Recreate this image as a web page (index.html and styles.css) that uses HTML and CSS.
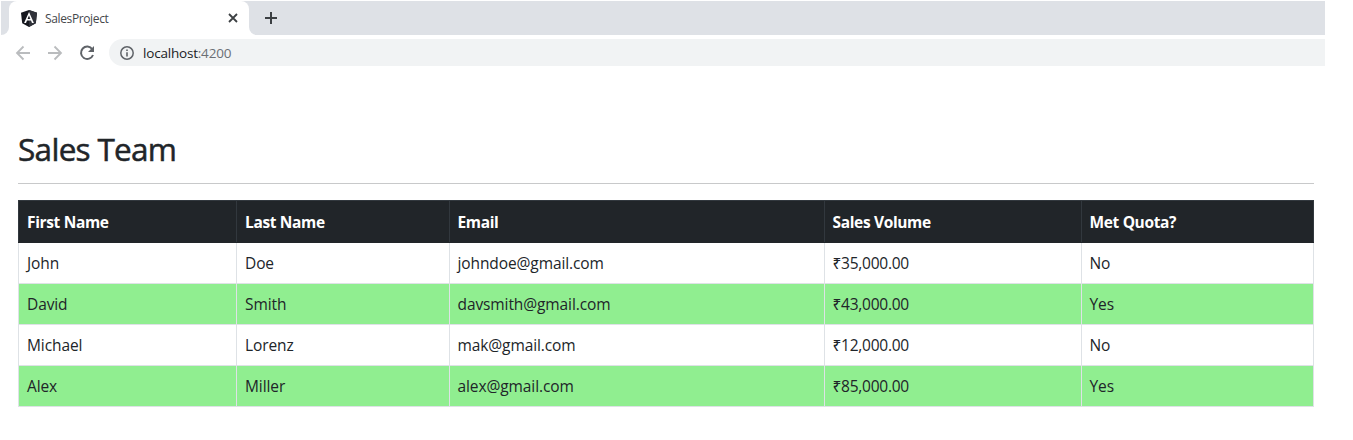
FILE: index.html
```
<!DOCTYPE html>
<html lang="en">
<head>
<meta charset="utf-8">
<title>SalesProject</title>
<link rel="stylesheet" href="styles.css">
</head>
<body>
<header class="browser">
  <div class="tabstrip">
    <div class="edge edge-left"></div>
    <div class="tab">
      <svg class="favicon" width="16" height="17" viewBox="0 0 16 17"><path fill="#15171e" d="M8 0l8 2.8-1.2 10.5L8 17l-6.800-3.700L0 2.800z"/><path fill="#30323a" d="M8 0l8 2.800-1.200 10.500L8 17z"/><path fill="#fff" fill-rule="evenodd" d="M8 2l4.900 11h-1.900l-1-2.500H6L5 13H3.100zM8 5.500L6.600 9h2.800z"/></svg>
      <span class="tab-title">SalesProject</span>
      <svg class="close" width="10" height="10" viewBox="0 0 10 10"><path d="M1 1l8 8M9 1L1 9" stroke="#3c4043" stroke-width="1.800"/></svg>
    </div>
    <div class="edge edge-right">
      <svg width="12" height="12" viewBox="0 0 12 12"><path d="M6 0v12M0 6h12" stroke="#3c4043" stroke-width="2"/></svg>
    </div>
  </div>
  <div class="toolbar">
    <svg class="nav" width="16" height="16" viewBox="0 0 16 16"><path d="M15 8H2M8.500 1.500L2 8l6.500 6.500" fill="none" stroke="#babcbe" stroke-width="1.800"/></svg>
    <svg class="nav" width="16" height="16" viewBox="0 0 16 16"><path d="M1 8h13M7.500 1.500L14 8l-6.500 6.500" fill="none" stroke="#babcbe" stroke-width="1.800"/></svg>
    <svg class="nav" width="16" height="16" viewBox="0 0 16 16"><path d="M13.300 4.200A6.200 6.200 0 1 0 14 10" fill="none" stroke="#5f6368" stroke-width="2"/><path d="M15 1v6H9z" fill="#5f6368"/></svg>
    <div class="address">
      <svg width="14" height="14" viewBox="0 0 14 14"><circle cx="7" cy="7" r="6.200" fill="none" stroke="#5f6368" stroke-width="1.500"/><path d="M7 6.200v4.300M7 3.500v1.500" stroke="#5f6368" stroke-width="1.600"/></svg>
      <span class="url">localhost<span class="port">:4200</span></span>
    </div>
  </div>
</header>
<main class="page">
  <h2 class="title">Sales Team</h2>
  <hr class="rule">
  <table class="sales">
    <colgroup><col class="c1"><col class="c2"><col class="c3"><col class="c4"><col class="c5"></colgroup>
    <thead><tr><th>First Name</th><th>Last Name</th><th>Email</th><th>Sales Volume</th><th>Met Quota?</th></tr></thead>
    <tbody>
      <tr><td>John</td><td>Doe</td><td>johndoe@gmail.com</td><td class="num">₹35,000.00</td><td>No</td></tr>
      <tr class="met"><td>David</td><td>Smith</td><td>davsmith@gmail.com</td><td class="num">₹43,000.00</td><td>Yes</td></tr>
      <tr><td>Michael</td><td>Lorenz</td><td>mak@gmail.com</td><td class="num">₹12,000.00</td><td>No</td></tr>
      <tr class="met"><td>Alex</td><td>Miller</td><td>alex@gmail.com</td><td class="num">₹85,000.00</td><td>Yes</td></tr>
    </tbody>
  </table>
</main>
</body>
</html>
```
FILE: styles.css
```
* { box-sizing: border-box; }
body { margin: 0; background: #fff; color: #212529; font-family: "Open Sans", "Noto Sans", sans-serif; font-size: 15.5px; }
svg { display: block; flex: none; }
.browser { width: 1325px; padding: 1px 0 0 1px; }
.tabstrip { display: flex; height: 34px; }
.edge { background: #dee1e6; }
.edge-left { width: 8px; border-radius: 0 0 8px 0; }
.edge-right { flex: 1; padding: 11px 0 0 16px; border-radius: 0 0 0 8px; }
.tab { display: flex; align-items: center; width: 240px; padding: 0 11px 0 12px; background: #fff; border-radius: 8px 8px 0 0; position: relative; }
.tab::before, .tab::after { content: ""; position: absolute; z-index: -1; top: 0; width: 8px; height: 9px; background: #dee1e6; }
.tab::before { left: 0; }
.tab::after { right: 0; }
.tab-title { flex: 1; padding-left: 8px; font-size: 12px; letter-spacing: -0.37px; color: #45484c; }
.toolbar { display: flex; align-items: center; height: 35px; padding: 0 0 0 14px; }
.nav { margin-right: 16px; }
.address { display: flex; align-items: center; flex: 1; height: 27px; margin: 0 0 0 -2px; padding-left: 11px; background: #f1f3f4; border-radius: 14px 0 0 14px; }
.url { margin-left: 9px; font-size: 13.5px; letter-spacing: -0.2px; color: #202124; }
.port { color: #6b6f74; }
.page { width: 1314px; padding: 59px 0 0 18px; }
.title { margin: 0; height: 54px; font-size: 31.5px; line-height: 40px; font-weight: 500; letter-spacing: -0.7px; -webkit-text-stroke: 0.5px #212529; }
.rule { margin: 0 0 16px; border: 0; height: 1px; background: #c8c9ca; }
.sales { width: 1296px; table-layout: fixed; border-collapse: collapse; }
.c1 { width: 218px; }
.c2 { width: 213px; }
.c3 { width: 375px; }
.c4 { width: 257px; }
.c5 { width: 232px; }
.sales th, .sales td { padding: 0 8px; text-align: left; border: 1px solid #dee2e6; line-height: 24px; }
.sales th { height: 42px; background: #212529; border-color: #32383e; border-bottom-color: #212529; color: #fff; font-weight: 700; letter-spacing: -0.35px; }
.sales th:nth-child(n+3), .sales td:nth-child(n+3) { padding-left: 7.5px; }
.sales td { height: 41px; letter-spacing: -0.1px; }
.sales .num { letter-spacing: -0.25px; }
.met { background: #90ee90; }
```
